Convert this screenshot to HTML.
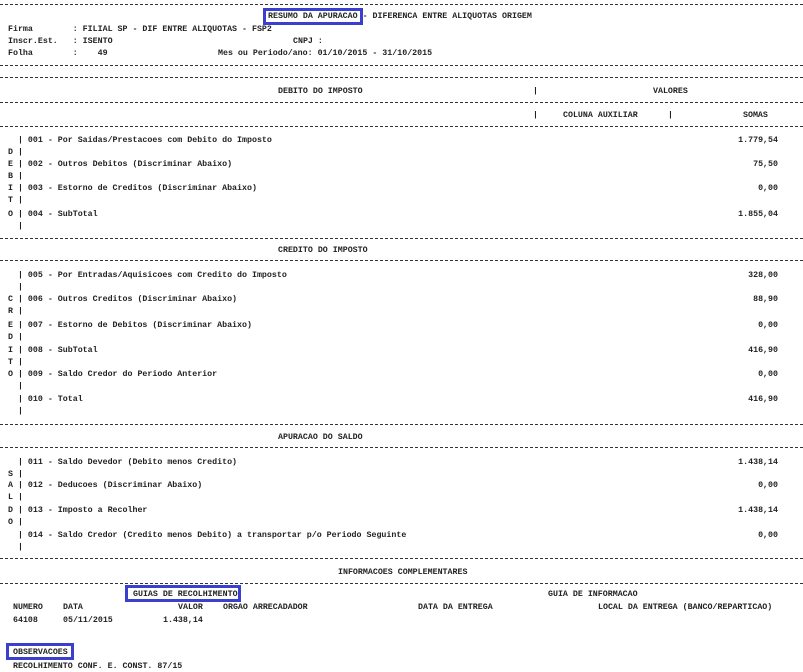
<!DOCTYPE html>
<html><head><meta charset="utf-8"><style>
body{margin:0;background:#fff;width:803px;height:670px;position:relative;overflow:hidden;font-family:"Liberation Mono",monospace;font-size:8.3px;font-weight:bold;color:#222}
.t{position:absolute;white-space:pre;line-height:10px;margin-top:2px}
.r{position:absolute;white-space:pre;line-height:10px;text-align:right;margin-top:2px}
.h{position:absolute;left:0;width:803px;height:1px;background:repeating-linear-gradient(90deg,#333 0 3px,transparent 3px 5px)}
.b{position:absolute;border:3px solid #3b3fcf}
</style></head><body>
<div class="h" style="top:4px"></div>
<div class="b" style="left:263px;top:8px;width:94px;height:11px"></div>
<div class="t" style="left:268px;top:10px">RESUMO DA APURACAO - DIFERENCA ENTRE ALIQUOTAS ORIGEM</div>
<div class="t" style="left:8px;top:23px">Firma        : FILIAL SP - DIF ENTRE ALIQUOTAS - FSP2</div>
<div class="t" style="left:8px;top:35px">Inscr.Est.   : ISENTO</div>
<div class="t" style="left:293px;top:35px">CNPJ :</div>
<div class="t" style="left:8px;top:47px">Folha        :    49</div>
<div class="t" style="left:218px;top:47px">Mes ou Periodo/ano: 01/10/2015 - 31/10/2015</div>
<div class="h" style="top:65px"></div>
<div class="h" style="top:77px"></div>
<div class="t" style="left:278px;top:85px">DEBITO DO IMPOSTO</div>
<div class="t" style="left:533px;top:85px">|</div>
<div class="t" style="left:653px;top:85px">VALORES</div>
<div class="h" style="top:102px"></div>
<div class="t" style="left:533px;top:109px">|</div>
<div class="t" style="left:563px;top:109px">COLUNA AUXILIAR</div>
<div class="t" style="left:668px;top:109px">|</div>
<div class="t" style="left:743px;top:109px">SOMAS</div>
<div class="h" style="top:126px"></div>

<div class="t" style="left:8px;top:134px">  | 001 - Por Saidas/Prestacoes com Debito do Imposto</div>
<div class="t" style="left:8px;top:146px">D |</div>
<div class="t" style="left:8px;top:158px">E | 002 - Outros Debitos (Discriminar Abaixo)</div>
<div class="t" style="left:8px;top:170px">B |</div>
<div class="t" style="left:8px;top:182px">I | 003 - Estorno de Creditos (Discriminar Abaixo)</div>
<div class="t" style="left:8px;top:194px">T |</div>
<div class="t" style="left:8px;top:208px">O | 004 - SubTotal</div>
<div class="t" style="left:8px;top:220px">  |</div>
<div class="r" style="right:25px;top:134px">1.779,54</div>
<div class="r" style="right:25px;top:158px">75,50</div>
<div class="r" style="right:25px;top:182px">0,00</div>
<div class="r" style="right:25px;top:208px">1.855,04</div>
<div class="h" style="top:238px"></div>
<div class="t" style="left:278px;top:244px">CREDITO DO IMPOSTO</div>
<div class="h" style="top:260px"></div>

<div class="t" style="left:8px;top:269px">  | 005 - Por Entradas/Aquisicoes com Credito do Imposto</div>
<div class="t" style="left:8px;top:281px">  |</div>
<div class="t" style="left:8px;top:293px">C | 006 - Outros Creditos (Discriminar Abaixo)</div>
<div class="t" style="left:8px;top:305px">R |</div>
<div class="t" style="left:8px;top:319px">E | 007 - Estorno de Debitos (Discriminar Abaixo)</div>
<div class="t" style="left:8px;top:331px">D |</div>
<div class="t" style="left:8px;top:344px">I | 008 - SubTotal</div>
<div class="t" style="left:8px;top:356px">T |</div>
<div class="t" style="left:8px;top:368px">O | 009 - Saldo Credor do Periodo Anterior</div>
<div class="t" style="left:8px;top:380px">  |</div>
<div class="t" style="left:8px;top:393px">  | 010 - Total</div>
<div class="t" style="left:8px;top:405px">  |</div>
<div class="r" style="right:25px;top:269px">328,00</div>
<div class="r" style="right:25px;top:293px">88,90</div>
<div class="r" style="right:25px;top:319px">0,00</div>
<div class="r" style="right:25px;top:344px">416,90</div>
<div class="r" style="right:25px;top:368px">0,00</div>
<div class="r" style="right:25px;top:393px">416,90</div>
<div class="h" style="top:424px"></div>
<div class="t" style="left:278px;top:431px">APURACAO DO SALDO</div>
<div class="h" style="top:447px"></div>

<div class="t" style="left:8px;top:456px">  | 011 - Saldo Devedor (Debito menos Credito)</div>
<div class="t" style="left:8px;top:468px">S |</div>
<div class="t" style="left:8px;top:479px">A | 012 - Deducoes (Discriminar Abaixo)</div>
<div class="t" style="left:8px;top:491px">L |</div>
<div class="t" style="left:8px;top:504px">D | 013 - Imposto a Recolher</div>
<div class="t" style="left:8px;top:516px">O |</div>
<div class="t" style="left:8px;top:529px">  | 014 - Saldo Credor (Credito menos Debito) a transportar p/o Periodo Seguinte</div>
<div class="t" style="left:8px;top:541px">  |</div>
<div class="r" style="right:25px;top:456px">1.438,14</div>
<div class="r" style="right:25px;top:479px">0,00</div>
<div class="r" style="right:25px;top:504px">1.438,14</div>
<div class="r" style="right:25px;top:529px">0,00</div>
<div class="h" style="top:558px"></div>
<div class="t" style="left:338px;top:566px">INFORMACOES COMPLEMENTARES</div>
<div class="h" style="top:583px"></div>

<div class="b" style="left:125px;top:585px;width:110px;height:11px"></div>
<div class="t" style="left:133px;top:588px">GUIAS DE RECOLHIMENTO</div>
<div class="t" style="left:548px;top:588px">GUIA DE INFORMACAO</div>
<div class="t" style="left:13px;top:601px">NUMERO</div>
<div class="t" style="left:63px;top:601px">DATA</div>
<div class="t" style="left:178px;top:601px">VALOR</div>
<div class="t" style="left:223px;top:601px">ORGAO ARRECADADOR</div>
<div class="t" style="left:418px;top:601px">DATA DA ENTREGA</div>
<div class="t" style="left:598px;top:601px">LOCAL DA ENTREGA (BANCO/REPARTICAO)</div>
<div class="t" style="left:13px;top:614px">64108</div>
<div class="t" style="left:63px;top:614px">05/11/2015</div>
<div class="t" style="left:163px;top:614px">1.438,14</div>
<div class="b" style="left:6px;top:643px;width:62px;height:11px"></div>
<div class="t" style="left:13px;top:646px">OBSERVACOES</div>
<div class="t" style="left:13px;top:660px">RECOLHIMENTO CONF. E. CONST. 87/15</div>
</body></html>
